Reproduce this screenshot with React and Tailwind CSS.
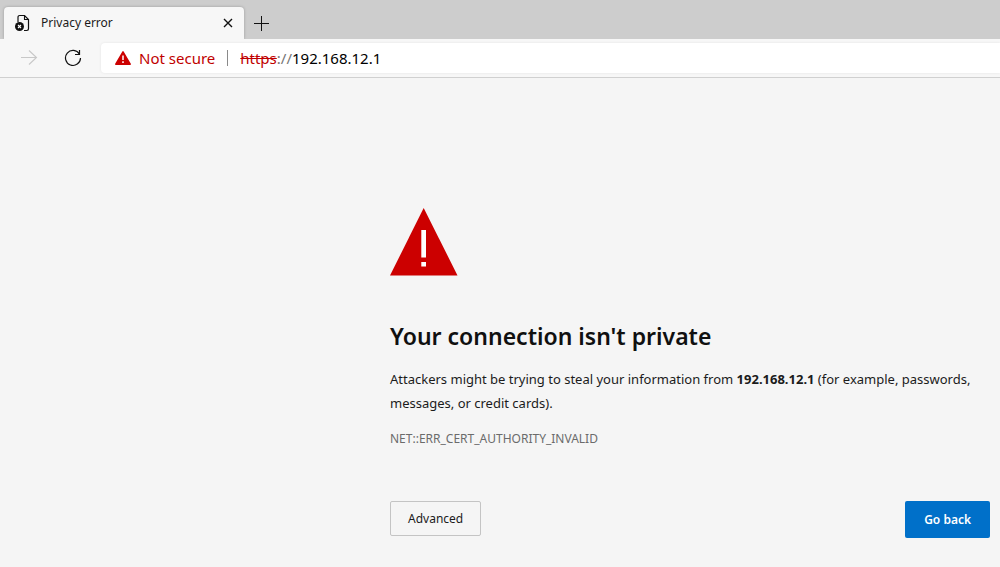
import React, { useState } from 'react';

const TabIcon = () => (
  <svg width="16" height="18" viewBox="0 0 16 18" fill="none" aria-hidden="true">
    <path
      d="M3 8V3.2C3 2.2 3.7 1.5 4.7 1.5H9.5L13.5 5.5V14.8C13.5 15.8 12.8 16.5 11.8 16.5H9"
      stroke="#111"
      strokeWidth="1.2"
    />
    <path d="M9.5 1.5V5.5H13.5" stroke="#111" strokeWidth="1.1" />
    <circle cx="4.5" cy="12.5" r="4.5" fill="#111" />
    <path d="M3 11L6 14M6 11L3 14" stroke="#fff" strokeWidth="1.1" />
  </svg>
);

const TabStrip = () => (
  <div className="flex h-[39px] items-end bg-[#cdcdcd] pl-1">
    <div className="flex h-8 w-60 items-center rounded-t-[4px] bg-[#f7f7f7] pr-2 pl-[11px] shadow-[0_0_3px_rgba(0,0,0,0.25)]">
      <TabIcon />
      <span className="ml-[10px] flex-1 text-[12px] text-[#1b1b1b]">Privacy error</span>
      <button type="button" aria-label="Close tab" className="flex h-4 w-4 items-center justify-center">
        <svg width="10" height="10" viewBox="0 0 10 10" stroke="#111" strokeWidth="1.4">
          <path d="M1 1L9 9M9 1L1 9" />
        </svg>
      </button>
    </div>
    <button type="button" aria-label="New tab" className="flex h-8 w-[35px] items-center justify-center">
      <svg width="15" height="15" viewBox="0 0 15 15" stroke="#111" strokeWidth="1">
        <path d="M7.5 0V15M0 7.5H15" />
      </svg>
    </button>
  </div>
);

const Toolbar = () => {
  const [host, setHost] = useState('192.168.12.1');

  return (
    <div className="relative flex h-[39px] items-center border-b border-[#d0d0d0] bg-[#f7f7f7] pl-5">
      <button type="button" aria-label="Forward" disabled className="flex h-5 w-[18px] items-center">
        <svg width="18" height="16" viewBox="0 0 18 16" fill="none" stroke="#c8c8c8" strokeWidth="1.1">
          <path d="M1 7.5H16.5M9 0.5L16.5 7.5L9 14.5" />
        </svg>
      </button>
      <button type="button" aria-label="Refresh" className="ml-[26px] flex h-5 w-[18px] items-center">
        <svg width="18" height="18" viewBox="0 0 18 18" fill="none" stroke="#111" strokeWidth="1.2">
          <path d="M15.5 5.2A7.5 7.5 0 1 0 16.5 9" />
          <path d="M15.5 1V5.5H11" />
        </svg>
      </button>
      <div className="ml-[19px] flex h-[30px] flex-1 items-center rounded-l-[4px] bg-white pl-[14px] text-[15px] shadow-[0_0_3px_rgba(0,0,0,0.08)]">
        <button type="button" className="flex items-center gap-2 text-[#c00000]">
          <svg width="16" height="14" viewBox="0 0 16 14" aria-hidden="true">
            <path d="M8 0.8L15.2 13.2H0.8Z" fill="#c00" stroke="#c00" strokeWidth="1.5" strokeLinejoin="round" />
            <path d="M8 4.5V9M8 10.3V12" stroke="#fff" strokeWidth="1.5" />
          </svg>
          Not secure
        </button>
        <span className="mx-3 h-4 w-px bg-[#8a8a8a]" />
        <label htmlFor="address" className="text-[#767676]">
          <span className="text-[#c00000] line-through">https</span>://
        </label>
        <input
          id="address"
          type="text"
          value={host}
          onChange={(e) => setHost(e.target.value)}
          className="min-w-0 flex-1 bg-transparent text-black outline-none"
        />
      </div>
    </div>
  );
};

const App = () => {
  return (
    <div className="min-h-screen bg-[#f5f5f5] font-['Noto_Sans','Open_Sans',sans-serif]">
      <TabStrip />
      <Toolbar />
      <main className="flex justify-end px-[10px] pt-[130px] pb-7">
        <div className="w-full max-w-[600px] text-[13px] leading-6 text-[#1b1b1b]">
          <svg width="68" height="68" viewBox="0 0 68 68" aria-hidden="true">
            <path d="M33.7 0L67.5 67.5H0Z" fill="#c00" />
            <path d="M31.3 22H36V49.5H31.3ZM31.3 54H36V58.5H31.3Z" fill="#fff" />
          </svg>
          <h1 className="mt-11 text-[23px] leading-8 font-semibold text-[#101010]">Your connection isn't private</h1>
          <p className="mt-[15px]">
            Attackers might be trying to steal your information from <strong>192.168.12.1</strong> (for example,
            passwords, messages, or credit cards).
          </p>
          <p className="mt-3 text-[12px] text-[#6b6b6b]">NET::ERR_CERT_AUTHORITY_INVALID</p>
          <div className="mt-[50px] flex items-start justify-between">
            <button
              type="button"
              className="h-[35px] rounded-[2px] border border-[#c4c4c4] px-[17px] text-[12px] hover:bg-gray-100"
            >
              Advanced
            </button>
            <button
              type="button"
              className="h-[37px] rounded-[2px] bg-[#0070c9] px-[19px] text-[12px] font-semibold text-white hover:bg-[#0064b4]"
            >
              Go back
            </button>
          </div>
        </div>
      </main>
    </div>
  );
};

export default App;
